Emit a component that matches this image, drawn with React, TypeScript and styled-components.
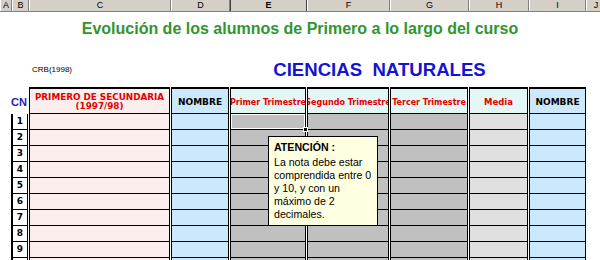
import React from 'react';
import styled, { createGlobalStyle } from 'styled-components';

const GlobalStyle = createGlobalStyle`
  html, body {
    margin: 0;
    padding: 0;
    background: #fff;
    width: 600px;
    height: 260px;
    overflow: hidden;
  }
`;

const colLetters = [
  { l: 'A', w: 12 },
  { l: 'B', w: 17 },
  { l: 'C', w: 142 },
  { l: 'D', w: 59 },
  { l: 'E', w: 77, active: true },
  { l: 'F', w: 83 },
  { l: 'G', w: 79 },
  { l: 'H', w: 60 },
  { l: 'I', w: 57 },
  { l: 'J', w: 20 },
];

const ColumnBar = styled.div`
  display: flex;
  height: 11px;
  background: #d4d0c8;
  border-bottom: 1px solid #808080;
  overflow: hidden;
`;

const ColumnHead = styled.div<{ $w: number; $active?: boolean }>`
  flex: 0 0 ${p => p.$w}px;
  box-sizing: border-box;
  height: 11px;
  border-right: 1px solid #808080;
  border-left: 1px solid #fff;
  font: ${p => (p.$active ? 'bold' : 'normal')} 9px/11px 'Liberation Sans', Arial, sans-serif;
  text-align: center;
  color: #000;
  ${p => p.$active && 'border-left-color: #404040; border-right-color: #404040;'}
`;

const Sheet = styled.div`
  position: relative;
  padding-top: 8px;
`;

const Title = styled.h1`
  margin: 0;
  font: bold 16px/18px 'Liberation Sans', Arial, sans-serif;
  color: #2f962f;
  text-align: center;
`;

const InfoRow = styled.div`
  display: grid;
  grid-template-columns: 29px 201px 299px 1fr;
  margin-top: 22px;
  height: 20px;
`;

const Author = styled.span`
  grid-column: 1 / 3;
  padding: 5px 0 0 32px;
  font: 8px/10px 'Liberation Sans', Arial, sans-serif;
  color: #000;
`;

const Subject = styled.h2`
  grid-column: 3;
  margin: 0;
  text-align: center;
  font: bold 18.6px/20px 'Liberation Sans', Arial, sans-serif;
  color: #1414d2;
  white-space: pre;
`;

const Table = styled.div`
  display: grid;
  grid-template-columns: 17px 141px 58px 76px 82px 78px 59px 57px;
  column-gap: 1px;
  margin: 7px 0 0 11px;
  width: 576px;
`;

const CornerLabel = styled.div`
  height: 27px;
  display: flex;
  align-items: center;
  padding-top: 2px;
  box-sizing: border-box;
  font: bold 11px 'Liberation Sans', Arial, sans-serif;
  color: #1c1cc8;
  white-space: nowrap;
`;

const HeadCell = styled.div<{ $bg: string; $fg: string; $size?: number }>`
  box-sizing: border-box;
  height: 27px;
  padding-top: 2px;
  border: 1px solid #000;
  border-top-width: 2px;
  background: ${p => p.$bg};
  color: ${p => p.$fg};
  display: flex;
  align-items: center;
  justify-content: center;
  text-align: center;
  overflow: hidden;
  white-space: nowrap;
  font: bold ${p => p.$size ?? 8}px/9px 'DejaVu Sans', Verdana, sans-serif;
`;

const HeadText = styled.span`
  white-space: pre;
`;

const RowNum = styled.div`
  box-sizing: border-box;
  height: 16px;
  background: #fff;
  border: 1px solid #000;
  border-left-width: 2px;
  border-top: none;
  font: bold 9px/15px 'DejaVu Sans', Verdana, sans-serif;
  text-align: center;
  color: #000;
`;

const Cell = styled.div<{ $bg: string; $selected?: boolean }>`
  position: relative;
  box-sizing: border-box;
  height: 16px;
  background: ${p => p.$bg};
  border: 1px solid #000;
  border-top: none;
  ${p =>
    p.$selected &&
    `
    box-shadow: inset 0 0 0 1px #fff;
    &::after {
      content: '';
      position: absolute;
      right: -3px;
      bottom: -3px;
      width: 3px;
      height: 3px;
      background: #000;
      border: 1px solid #fff;
      z-index: 2;
    }
  `}
`;

const Tooltip = styled.div`
  position: absolute;
  left: 268px;
  top: 124px;
  width: 110px;
  height: 90px;
  box-sizing: border-box;
  padding: 4px 2px 4px 5px;
  background: #ffffe1;
  border: 1px solid #000;
  font: 10.6px/13px 'Liberation Sans', Tahoma, sans-serif;
  color: #000;
  white-space: pre;
  overflow: hidden;
  z-index: 5;
`;

const TooltipTitle = styled.div`
  font-weight: bold;
  margin-bottom: 2px;
`;

const columns = [
  { bg: '#fdeeee', headBg: '#fdeeee', headFg: '#e00000', label: 'PRIMERO DE SECUNDARIA\n(1997/98)', size: 8.8 },
  { bg: '#cce8fc', headBg: '#cce8fc', headFg: '#000', label: 'NOMBRE', size: 9 },
  { bg: '#c0c0c0', headBg: '#e4f7f7', headFg: '#e00000', label: 'Primer Trimestre', size: 8 },
  { bg: '#c0c0c0', headBg: '#e4f7f7', headFg: '#e00000', label: 'Segundo Trimestre', size: 8 },
  { bg: '#c0c0c0', headBg: '#e4f7f7', headFg: '#e00000', label: 'Tercer Trimestre', size: 8 },
  { bg: '#e0e0e0', headBg: '#e4f7f7', headFg: '#e00000', label: 'Media', size: 8.5 },
  { bg: '#cce8fc', headBg: '#cce8fc', headFg: '#000', label: 'NOMBRE', size: 9 },
];

const rows = [1, 2, 3, 4, 5, 6, 7, 8, 9, 10];

export default function App() {
  return (
    <>
      <GlobalStyle />
      <ColumnBar>
        {colLetters.map(c => (
          <ColumnHead key={c.l} $w={c.w} $active={c.active}>
            {c.l}
          </ColumnHead>
        ))}
      </ColumnBar>
      <Sheet>
        <Title>Evolución de los alumnos de Primero a lo largo del curso</Title>
        <InfoRow>
          <Author>CRB(1998)</Author>
          <Subject>{'CIENCIAS  NATURALES'}</Subject>
        </InfoRow>
        <Table>
          <CornerLabel>CN</CornerLabel>
          {columns.map((c, i) => (
            <HeadCell key={i} $bg={c.headBg} $fg={c.headFg} $size={c.size}>
              <HeadText>{c.label}</HeadText>
            </HeadCell>
          ))}
          {rows.map(r => (
            <React.Fragment key={r}>
              {/* the last row is only partly visible, so its number is left out */}
              <RowNum>{r < 10 ? r : ''}</RowNum>
              {columns.map((c, i) => (
                <Cell key={i} $bg={c.bg} $selected={r === 1 && i === 2} />
              ))}
            </React.Fragment>
          ))}
        </Table>
        <Tooltip>
          <TooltipTitle>ATENCIÓN :</TooltipTitle>
          {'La nota debe estar\ncomprendida entre 0\ny 10, y con un\nmáximo de 2\ndecimales.'}
        </Tooltip>
      </Sheet>
    </>
  );
}
